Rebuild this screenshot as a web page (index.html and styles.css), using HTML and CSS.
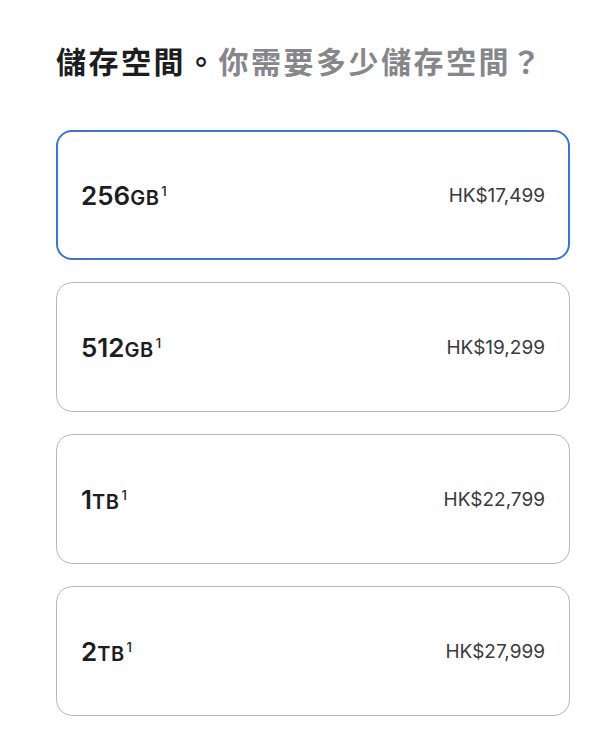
FILE: index.html
```html
<!DOCTYPE html>
<html>
<head>
    <title>儲存空間</title>
    <link rel="stylesheet" href="styles.css">
</head>
<body>
    <div class="storage-section">
        <h2 class="storage-title">儲存空間。<span class="storage-question">你需要多少儲存空間？</span></h2>

        <div class="storage-options">
            <div class="option selected">
                <span class="capacity">256<span class="unit">GB</span><sup>1</sup></span>
                <span class="price">HK$17,499</span>
            </div>
            <div class="option">
                <span class="capacity">512<span class="unit">GB</span><sup>1</sup></span>
                <span class="price">HK$19,299</span>
            </div>
            <div class="option">
                <span class="capacity">1<span class="unit">TB</span><sup>1</sup></span>
                <span class="price">HK$22,799</span>
            </div>
            <div class="option">
                <span class="capacity">2<span class="unit">TB</span><sup>1</sup></span>
                <span class="price">HK$27,999</span>
            </div>
        </div>
    </div>
</body>
</html>
```

FILE: styles.css
```css
body {
    margin: 0;
    background-color: #fff;
    font-family: Inter, "Noto Sans", "Noto Sans CJK TC", sans-serif;
    color: #1d1d1f;
}

.storage-section {
    padding: 38px 30px 0 56px;
}

.storage-title {
    margin: 0 0 48px;
    font-family: "Noto Sans CJK TC", sans-serif;
    font-size: 30px;
    font-weight: 700;
    letter-spacing: 2.5px;
    line-height: 44px;
    color: #1d1d1f;
}

.storage-question {
    color: #86868b;
}

.storage-options {
    display: flex;
    flex-direction: column;
    gap: 22px;
    width: 514px;
}

.option {
    display: flex;
    justify-content: space-between;
    align-items: center;
    height: 128px;
    padding: 0 24px;
    border: 1px solid #b8b8b8;
    border-radius: 16px;
}

/* selected option gets the thicker blue outline */
.option.selected {
    height: 126px;
    border: 2px solid #3b76c8;
    padding: 0 23px;
}

.capacity {
    font-size: 26px;
    font-weight: 600;
    color: #1d1d1f;
}

.unit {
    font-size: 20px;
    letter-spacing: 0.5px;
}

.capacity sup {
    font-size: 13px;
    font-weight: 500;
    vertical-align: 9px;
    margin-left: 2px;
}

.price {
    font-size: 19px;
    color: #3a3a3c;
}
```
